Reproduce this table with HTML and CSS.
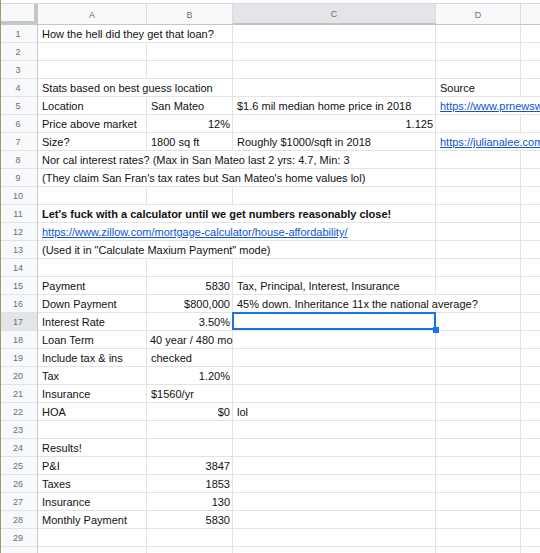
FILE: index.html
```html
<!DOCTYPE html>
<html>
<head>
<meta charset="utf-8">
<link rel="stylesheet" href="styles.css">
</head>
<body>
<div class="page">
  <div class="topstrip"></div>
  <div class="sheet">
    <div class="corner"></div><div class="ch">A</div><div class="ch">B</div><div class="ch chsel">C</div><div class="ch">D</div><div class="ch"></div>

    <div class="rh">1</div><div class="c s2">How the hell did they get that loan?</div><div class="c"></div><div class="c"></div><div class="c"></div>
    <div class="rh">2</div><div class="c"></div><div class="c"></div><div class="c"></div><div class="c"></div><div class="c"></div>
    <div class="rh">3</div><div class="c"></div><div class="c"></div><div class="c"></div><div class="c"></div><div class="c"></div>
    <div class="rh">4</div><div class="c s2">Stats based on best guess location</div><div class="c"></div><div class="c">Source</div><div class="c"></div>
    <div class="rh">5</div><div class="c">Location</div><div class="c">San Mateo</div><div class="c">$1.6 mil median home price in 2018</div><div class="c s2"><span class="link">https://www.prnewswire.com/news-releases/</span></div>
    <div class="rh">6</div><div class="c">Price above market</div><div class="c r">12%</div><div class="c r">1.125</div><div class="c"></div><div class="c"></div>
    <div class="rh">7</div><div class="c">Size?</div><div class="c">1800 sq ft</div><div class="c">Roughly $1000/sqft in 2018</div><div class="c s2"><span class="link">https://julianalee.com/</span></div>
    <div class="rh">8</div><div class="c s3">Nor cal interest rates? (Max in San Mateo last 2 yrs: 4.7, Min: 3</div><div class="c"></div><div class="c"></div>
    <div class="rh">9</div><div class="c s3">(They claim San Fran's tax rates but San Mateo's home values lol)</div><div class="c"></div><div class="c"></div>
    <div class="rh">10</div><div class="c"></div><div class="c"></div><div class="c"></div><div class="c"></div><div class="c"></div>
    <div class="rh">11</div><div class="c s3 b">Let's fuck with a calculator until we get numbers reasonably close!</div><div class="c"></div><div class="c"></div>
    <div class="rh">12</div><div class="c s3"><span class="link">https://www.zillow.com/mortgage-calculator/house-affordability/</span></div><div class="c"></div><div class="c"></div>
    <div class="rh">13</div><div class="c s3">(Used it in "Calculate Maxium Payment" mode)</div><div class="c"></div><div class="c"></div>
    <div class="rh">14</div><div class="c"></div><div class="c"></div><div class="c"></div><div class="c"></div><div class="c"></div>
    <div class="rh">15</div><div class="c">Payment</div><div class="c r">5830</div><div class="c">Tax, Principal, Interest, Insurance</div><div class="c"></div><div class="c"></div>
    <div class="rh">16</div><div class="c">Down Payment</div><div class="c r">$800,000</div><div class="c s2">45% down. Inheritance 11x the national average?</div><div class="c"></div>
    <div class="rh rhsel">17</div><div class="c">Interest Rate</div><div class="c r">3.50%</div><div class="c sel"><span class="handle"></span></div><div class="c"></div><div class="c"></div>
    <div class="rh">18</div><div class="c">Loan Term</div><div class="c spill">40 year / 480 mo</div><div class="c"></div><div class="c"></div><div class="c"></div>
    <div class="rh">19</div><div class="c">Include tax &amp; ins</div><div class="c">checked</div><div class="c"></div><div class="c"></div><div class="c"></div>
    <div class="rh">20</div><div class="c">Tax</div><div class="c r">1.20%</div><div class="c"></div><div class="c"></div><div class="c"></div>
    <div class="rh">21</div><div class="c">Insurance</div><div class="c">$1560/yr</div><div class="c"></div><div class="c"></div><div class="c"></div>
    <div class="rh">22</div><div class="c">HOA</div><div class="c r">$0</div><div class="c">lol</div><div class="c"></div><div class="c"></div>
    <div class="rh">23</div><div class="c"></div><div class="c"></div><div class="c"></div><div class="c"></div><div class="c"></div>
    <div class="rh">24</div><div class="c">Results!</div><div class="c"></div><div class="c"></div><div class="c"></div><div class="c"></div>
    <div class="rh">25</div><div class="c">P&amp;I</div><div class="c r">3847</div><div class="c"></div><div class="c"></div><div class="c"></div>
    <div class="rh">26</div><div class="c">Taxes</div><div class="c r">1853</div><div class="c"></div><div class="c"></div><div class="c"></div>
    <div class="rh">27</div><div class="c">Insurance</div><div class="c r">130</div><div class="c"></div><div class="c"></div><div class="c"></div>
    <div class="rh">28</div><div class="c">Monthly Payment</div><div class="c r">5830</div><div class="c"></div><div class="c"></div><div class="c"></div>
    <div class="rh">29</div><div class="c"></div><div class="c"></div><div class="c"></div><div class="c"></div><div class="c"></div>
    <div class="rh">30</div><div class="c"></div><div class="c"></div><div class="c"></div><div class="c"></div><div class="c"></div>
  </div>
</div>
</body>
</html>
```

FILE: styles.css
```css
html, body {
  margin: 0;
  padding: 0;
  background: #ffffff;
  overflow: hidden;
}
.page {
  width: 540px;
  height: 553px;
  overflow: hidden;
  border-left: 1px solid #a39a6c;
  box-sizing: border-box;
  font-family: "Liberation Sans", Arial, sans-serif;
}
.topstrip {
  height: 4px;
  background: #ffffff;
  border-bottom: 1px solid #d6d8db;
  box-sizing: border-box;
}
.sheet {
  display: grid;
  grid-template-columns: 37px 109px 86px 203px 85px 100px;
  grid-template-rows: 21px repeat(30, 18px);
  width: 620px;
}
.corner {
  background: #f8f9fa;
  border-right: 4px solid #c4c7c8;
  border-bottom: 4px solid #c4c7c8;
  box-sizing: border-box;
}
.ch {
  background: #f8f9fa;
  border-right: 1px solid #dadcdf;
  border-bottom: 1px solid #c4c7c8;
  box-sizing: border-box;
  color: #6b6e72;
  font-size: 9px;
  display: flex;
  align-items: center;
  justify-content: center;
  padding-top: 1px;
}
.chsel {
  background: #e3e5e8;
  border-bottom: 2px solid #bfc2c5;
}
.rh {
  background: #f8f9fa;
  border-right: 1px solid #c4c7c8;
  border-bottom: 1px solid #e2e3e3;
  box-sizing: border-box;
  color: #6b6e72;
  font-size: 9px;
  display: flex;
  align-items: center;
  justify-content: center;
  padding-right: 2px;
}
.rhsel {
  background: #e3e5e8;
}
.c {
  border-right: 1px solid #e2e3e3;
  border-bottom: 1px solid #e2e3e3;
  box-sizing: border-box;
  font-size: 11px;
  line-height: 13px;
  color: #111111;
  padding: 0 3px 1px 4px;
  white-space: nowrap;
  overflow: hidden;
  display: flex;
  align-items: flex-end;
}
.spill {
  overflow: visible;
  padding-left: 3px;
  position: relative;
  z-index: 1;
}
.r {
  justify-content: flex-end;
  padding-right: 2px;
}
.b {
  font-weight: bold;
}
.s2 {
  grid-column: span 2;
}
.s3 {
  grid-column: span 3;
}
.link {
  color: #1155cc;
  text-decoration: underline;
}
.sel {
  position: relative;
  overflow: visible;
  z-index: 2;
}
.sel::after {
  content: "";
  position: absolute;
  top: -1px;
  left: -1px;
  right: -1px;
  bottom: 0;
  border: 2px solid #1a73e8;
}
.handle {
  position: absolute;
  right: -4px;
  bottom: -3px;
  width: 6px;
  height: 6px;
  background: #1a73e8;
  z-index: 3;
}
```
